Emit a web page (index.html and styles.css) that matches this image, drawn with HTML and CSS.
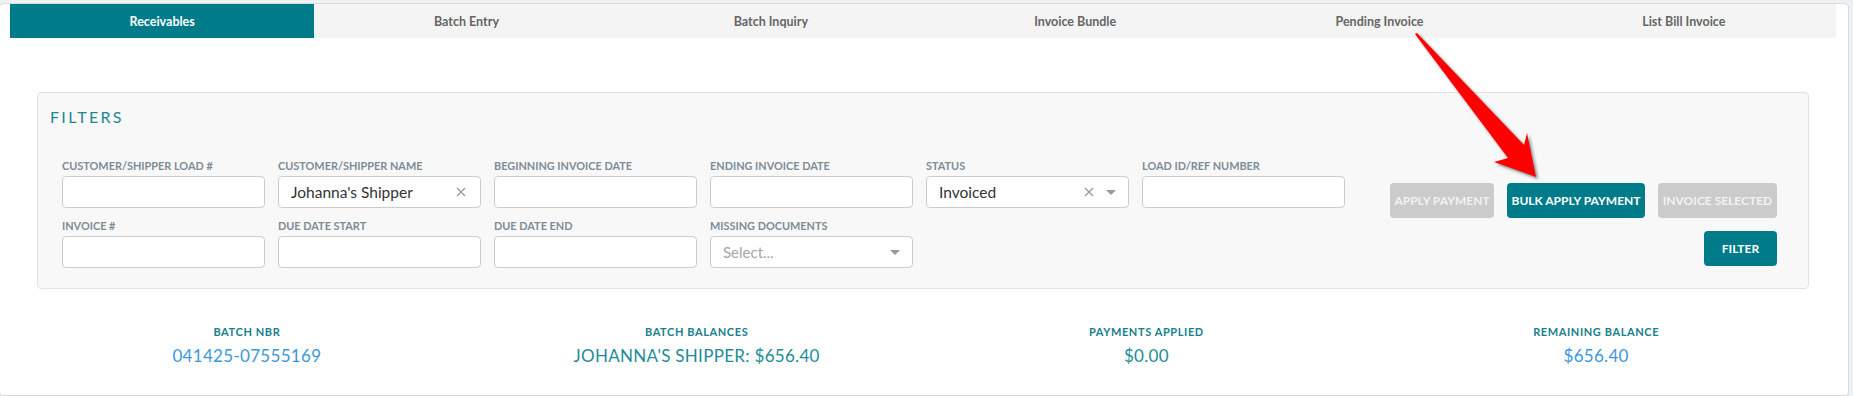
FILE: index.html
```html
<!DOCTYPE html>
<html lang="en">
<head>
<meta charset="utf-8">
<title>Receivables</title>
<link rel="stylesheet" href="styles.css">
</head>
<body>
<div class="card">
  <nav class="tabs">
    <a class="tab active">Receivables</a>
    <a class="tab">Batch Entry</a>
    <a class="tab">Batch Inquiry</a>
    <a class="tab">Invoice Bundle</a>
    <a class="tab">Pending Invoice</a>
    <a class="tab">List Bill Invoice</a>
  </nav>
  <div class="content">
    <section class="panel">
      <h2 class="panel-title">FILTERS</h2>
      <div class="panel-body">
        <div class="fields">
          <div class="field"><label>CUSTOMER/SHIPPER LOAD #</label><div class="input"></div></div>
          <div class="field"><label>CUSTOMER/SHIPPER NAME</label><div class="input select"><span class="val">Johanna's Shipper</span><span class="clear"><svg width="10" height="10" viewBox="0 0 10 10"><path d="M1 1L9 9M9 1L1 9" stroke="#999" stroke-width="1.3"/></svg></span></div></div>
          <div class="field"><label>BEGINNING INVOICE DATE</label><div class="input"></div></div>
          <div class="field"><label>ENDING INVOICE DATE</label><div class="input"></div></div>
          <div class="field"><label>STATUS</label><div class="input select"><span class="val">Invoiced</span><span class="clear"><svg width="10" height="10" viewBox="0 0 10 10"><path d="M1 1L9 9M9 1L1 9" stroke="#999" stroke-width="1.3"/></svg></span><span class="caret"></span></div></div>
          <div class="field"><label>LOAD ID/REF NUMBER</label><div class="input"></div></div>
          <div class="field"><label>INVOICE #</label><div class="input"></div></div>
          <div class="field"><label>DUE DATE START</label><div class="input"></div></div>
          <div class="field"><label>DUE DATE END</label><div class="input"></div></div>
          <div class="field"><label>MISSING DOCUMENTS</label><div class="input select"><span class="val placeholder">Select...</span><span class="caret"></span></div></div>
        </div>
        <div class="actions">
          <div class="btn-row">
            <button class="btn disabled w-apply">APPLY PAYMENT</button>
            <button class="btn primary w-bulk">BULK APPLY PAYMENT</button>
            <button class="btn disabled w-inv">INVOICE SELECTED</button>
          </div>
          <div class="btn-row second">
            <button class="btn primary w-filter">FILTER</button>
          </div>
        </div>
      </div>
    </section>
    <div class="summary">
      <div class="stat"><div class="stat-label">BATCH NBR</div><div class="stat-value blue">041425-07555169</div></div>
      <div class="stat"><div class="stat-label">BATCH BALANCES</div><div class="stat-value teal">JOHANNA'S SHIPPER: $656.40</div></div>
      <div class="stat"><div class="stat-label">PAYMENTS APPLIED</div><div class="stat-value teal">$0.00</div></div>
      <div class="stat"><div class="stat-label">REMAINING BALANCE</div><div class="stat-value blue">$656.40</div></div>
    </div>
  </div>
</div>
<svg class="arrow" width="1853" height="396" viewBox="0 0 1853 396">
  <polygon points="1415,34 1417,33 1524,145 1527,133 1536,177 1494,162 1508,158" fill="#ff0000"/>
</svg>
</body>
</html>
```

FILE: styles.css
```css
html, body {
  margin: 0;
  padding: 0;
}
body {
  background: #eef1f3;
  font-family: Lato, "Open Sans", sans-serif;
  width: 1853px;
  height: 396px;
  overflow: hidden;
  position: relative;
}
.card {
  box-sizing: border-box;
  margin: 3px 4px 0 -1px;
  height: 393px;
  background: #fff;
  border: 1px solid #d9dcdf;
  border-radius: 4px;
  padding: 0 12px 0 10px;
}
.tabs {
  display: grid;
  grid-template-columns: repeat(6, 1fr);
  height: 34px;
  background: #f4f4f4;
}
.tab {
  display: flex;
  align-items: center;
  justify-content: center;
  font-size: 12.5px;
  font-weight: 700;
  color: #666;
}
.tab.active {
  background: #007b89;
  color: #fff;
}
.content {
  margin: 54px 15px 0 12px;
}
.panel {
  margin: 0 12px 0 15px;
  background: #f8f8f8;
  border: 1px solid #e2e2e2;
  border-radius: 4px;
  padding: 14px 31px 20px 12px;
}
.panel-title {
  margin: 0 0 33px 0;
  font-size: 16px;
  line-height: 19px;
  font-weight: 400;
  letter-spacing: 2.3px;
  color: #1f8794;
}
.panel-body {
  display: flex;
  align-items: flex-start;
}
.fields {
  margin-left: 12px;
  display: grid;
  grid-template-columns: repeat(6, 203px);
  column-gap: 13px;
  row-gap: 11px;
}
.field label {
  display: block;
  font-size: 10.9px;
  line-height: 14px;
  font-weight: 700;
  color: #7d8c97;
  margin-bottom: 3px;
  white-space: nowrap;
}
.input {
  box-sizing: border-box;
  height: 32px;
  background: #fff;
  border: 1px solid #cccccc;
  border-radius: 4px;
  display: flex;
  align-items: center;
  padding: 0 12px;
}
.val {
  flex: 1;
  font-size: 15.5px;
  color: #333;
}
.val.placeholder {
  color: #a6a6a6;
  font-size: 15px;
}
.clear {
  display: flex;
  align-items: center;
  margin-right: 2px;
}
.caret {
  width: 0;
  height: 0;
  border-left: 5px solid transparent;
  border-right: 5px solid transparent;
  border-top: 5px solid #999;
  margin-left: 10px;
  margin-right: 0;
}
.actions {
  margin-left: auto;
  margin-top: 24px;
  display: flex;
  flex-direction: column;
  align-items: flex-end;
}
.btn-row {
  display: flex;
  gap: 13px;
}
.btn-row.second {
  margin-top: 13px;
}
.btn {
  height: 35px;
  border: none;
  border-radius: 4px;
  font-family: Lato, sans-serif;
  font-size: 12px;
  font-weight: 700;
  color: #fff;
  padding: 0;
  white-space: nowrap;
}
.btn.primary { background: #007b89; }
.btn.disabled { background: #cbcbcb; color: #f2f2f2; }
.w-apply { width: 104px; }
.w-bulk { width: 138px; }
.w-inv { width: 119px; }
.w-filter { width: 73px; }
.summary {
  margin-top: 36px;
  display: grid;
  grid-template-columns: repeat(4, 1fr);
  text-align: center;
}
.stat-label {
  font-size: 11px;
  line-height: 14px;
  font-weight: 700;
  letter-spacing: 0.6px;
  color: #16808d;
}
.stat-value {
  margin-top: 7px;
  font-size: 17px;
  line-height: 20px;
  letter-spacing: 0.3px;
}
.stat-value.blue { color: #3b98dc; }
.stat-value.teal { color: #1d8b99; }
.arrow {
  position: absolute;
  left: 0;
  top: 0;
  pointer-events: none;
  filter: drop-shadow(2px 2px 1.5px rgba(0,0,0,0.45));
}
```
